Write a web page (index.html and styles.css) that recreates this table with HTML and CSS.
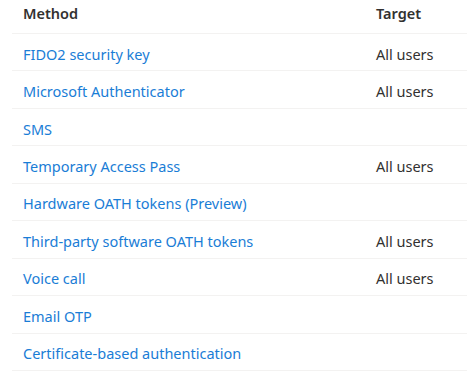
FILE: index.html
```html
<!DOCTYPE html>
<html>
<head>
<meta charset="utf-8">
<link rel="stylesheet" href="styles.css">
</head>
<body>
<div class="table">
  <div class="row head"><div class="cell">Method</div><div class="cell">Target</div></div>
  <div class="row"><div class="cell link">FIDO2 security key</div><div class="cell">All users</div></div>
  <div class="row"><div class="cell link">Microsoft Authenticator</div><div class="cell">All users</div></div>
  <div class="row"><div class="cell link">SMS</div><div class="cell"></div></div>
  <div class="row"><div class="cell link">Temporary Access Pass</div><div class="cell">All users</div></div>
  <div class="row"><div class="cell link">Hardware OATH tokens (Preview)</div><div class="cell"></div></div>
  <div class="row"><div class="cell link">Third-party software OATH tokens</div><div class="cell">All users</div></div>
  <div class="row"><div class="cell link">Voice call</div><div class="cell">All users</div></div>
  <div class="row"><div class="cell link">Email OTP</div><div class="cell"></div></div>
  <div class="row"><div class="cell link">Certificate-based authentication</div><div class="cell"></div></div>
</div>
</body>
</html>
```
FILE: styles.css
```css
html, body { margin: 0; padding: 0; background: #fff; }
body {
  font-family: "Noto Sans", "Open Sans", sans-serif;
  font-size: 14.5px;
  color: #323130;
}
.table {
  margin-left: 12px;
  display: flex;
  flex-direction: column;
}
.row {
  display: grid;
  grid-template-columns: 1fr 91px;
  align-items: center;
  box-sizing: border-box;
  height: 37.44px;
  padding-top: 3px;
  border-bottom: 1px solid #f3f2f1;
  padding-left: 11px;
}
.row.head {
  height: 34px;
  padding-top: 0;
  padding-bottom: 8px;
  font-weight: 600;
}
.link { color: #1a7dd6; }
```
